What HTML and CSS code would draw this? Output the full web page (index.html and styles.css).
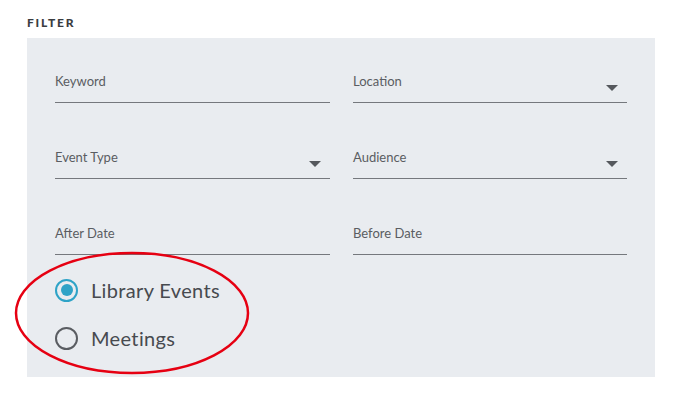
FILE: index.html
```html
<!DOCTYPE html>
<html lang="en">

<head>
    <meta charset="UTF-8">
    <meta name="viewport" content="width=device-width, initial-scale=1.0">
    <title>Filter</title>
    <link rel="stylesheet" href="styles.css">
</head>

<body>
    <h4 class="title">FILTER</h4>
    <form class="filter">
        <div class="fields">
            <!-- Keyword -->
            <div class="field">
                <span class="label">Keyword</span>
            </div>
            <!-- Location -->
            <div class="field">
                <span class="label">Location</span>
                <span class="arrow"></span>
            </div>
            <!-- Event Type -->
            <div class="field">
                <span class="label">Event Type</span>
                <span class="arrow"></span>
            </div>
            <!-- Audience -->
            <div class="field">
                <span class="label">Audience</span>
                <span class="arrow"></span>
            </div>
            <!-- Dates -->
            <div class="field">
                <span class="label">After Date</span>
            </div>
            <div class="field">
                <span class="label">Before Date</span>
            </div>
        </div>

        <div class="radios">
            <label class="radio">
                <span class="dot checked"></span>
                <span>Library Events</span>
            </label>
            <label class="radio">
                <span class="dot"></span>
                <span>Meetings</span>
            </label>
        </div>
    </form>

    <!-- annotation -->
    <svg class="mark" width="240" height="126" viewBox="0 0 240 126">
        <ellipse cx="120" cy="63" rx="116" ry="60" fill="none" stroke="#e60012" stroke-width="2.5" />
    </svg>
</body>

</html>
```

FILE: styles.css
```css
body {
    margin: 0;
    background-color: #ffffff;
    color: #474a4f;
    font-family: Lato, "Noto Sans", sans-serif;
    position: relative;
}

.title {
    margin: 0;
    padding: 15px 0 0 27px;
    height: 23px;
    font-size: 12px;
    font-weight: 900;
    letter-spacing: 1.8px;
    color: #3a3c40;
}

.filter {
    background-color: #e9ecf0;
    width: 572px;
    margin-left: 27px;
    padding: 0 28px 15px 28px;
}

.fields {
    display: grid;
    grid-template-columns: 275px 274px;
    column-gap: 23px;
    row-gap: 11px;
}

.field {
    border-bottom: 1px solid #75787d;
    display: flex;
    align-items: flex-end;
    justify-content: space-between;
    padding-bottom: 10px;
    height: 54px;
}

.label {
    font-size: 13px;
    line-height: 20px;
    color: #5a5d62;
    margin-bottom: 1px;
}

.arrow {
    width: 0;
    height: 0;
    border-left: 6px solid transparent;
    border-right: 6px solid transparent;
    border-top: 6px solid #55585d;
    margin: 0 9px 1px 0;
}

.radios {
    padding-top: 11px;
}

.radio {
    display: flex;
    align-items: center;
    height: 48px;
    font-size: 20px;
    letter-spacing: 0.35px;
    color: #474a4f;
}

.dot {
    width: 19px;
    height: 19px;
    border: 2.5px solid #5a5d62;
    border-radius: 50%;
    margin-right: 13px;
    position: relative;
}

.dot.checked {
    border-color: #2ea3c7;
}

.dot.checked::after {
    content: "";
    position: absolute;
    left: 3.5px;
    top: 3.5px;
    width: 12px;
    height: 12px;
    border-radius: 50%;
    background-color: #2ea3c7;
}

.mark {
    position: absolute;
    left: 12px;
    top: 250px;
}
```
